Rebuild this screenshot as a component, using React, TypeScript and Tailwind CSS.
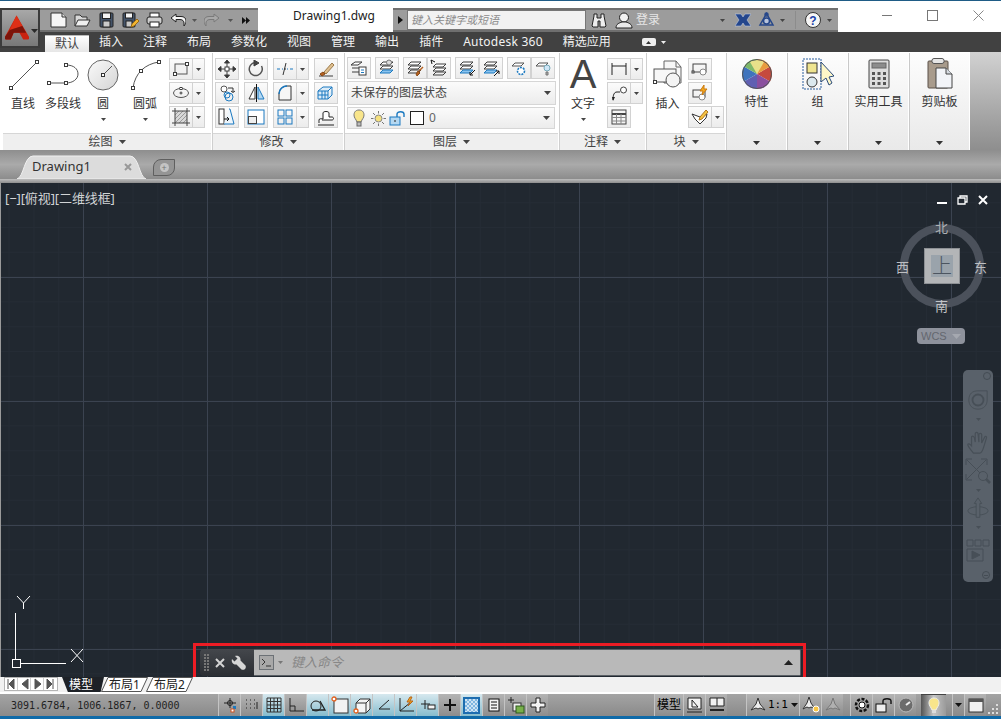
import type { ReactNode } from 'react';

const BLUE = '#1b79c0';
const DARK = '#3c3c3c';

function S({ w = 18, h = 18, children }: { w?: number; h?: number; children: ReactNode }) {
  return (
    <svg width={w} height={h} viewBox={`0 0 ${w} ${h}`} fill="none" stroke={DARK} strokeWidth={1} className="block flex-shrink-0">
      {children}
    </svg>
  );
}

function Caret({ color = '#444', up = false, w = 7 }: { color?: string; up?: boolean; w?: number }) {
  const h = Math.ceil(w / 2);
  return (
    <svg width={w} height={h} viewBox={`0 0 ${w} ${h}`} className="block flex-shrink-0">
      <polygon points={up ? `0,${h} ${w},${h} ${w / 2},0` : `0,0 ${w},0 ${w / 2},${h}`} fill={color} />
    </svg>
  );
}

function Pt({ x, y, s = 3, c = DARK }: { x: number; y: number; s?: number; c?: string }) {
  return <rect x={x - s / 2} y={y - s / 2} width={s} height={s} fill="#fff" stroke={c} />;
}

/* Ribbon building blocks */
function Small({ children }: { children: ReactNode }) {
  return (
    <div className="w-6 h-[22px] flex items-center justify-center border border-[#d2d2d2] bg-gradient-to-b from-[#fbfbfb] to-[#ececec]">
      {children}
    </div>
  );
}

function Split({ children }: { children: ReactNode }) {
  return (
    <div className="flex">
      <Small>{children}</Small>
      <div className="w-3 h-[22px] flex items-center justify-center border border-l-0 border-[#d2d2d2] bg-gradient-to-b from-[#fbfbfb] to-[#ececec]">
        <Caret w={5} />
      </div>
    </div>
  );
}

function Big({ icon, label, caret = false, w }: { icon: ReactNode; label: string; caret?: boolean; w: string }) {
  return (
    <div className={`${w} flex flex-col items-center flex-shrink-0`}>
      <div className="h-[38px] mt-[3px] flex items-center justify-center">{icon}</div>
      <div className="text-[12px] leading-[16px] text-[#333] mt-[2px] whitespace-nowrap">{label}</div>
      {caret && <div className="mt-[6px]"><Caret w={5} /></div>}
    </div>
  );
}

function Panel({ w, title, children, cls = '' }: { w: string; title: string; children: ReactNode; cls?: string }) {
  return (
    <div className={`${w} h-[97px] flex flex-col flex-shrink-0`}>
      <div className={`h-[80px] flex ${cls}`}>{children}</div>
      <div className="h-[17px] flex items-center justify-center gap-[6px] bg-[#efefef] border-t border-[#d6d6d6] text-[12px] text-[#444]">
        {title}
        <Caret w={7} />
      </div>
    </div>
  );
}

function Collapsed({ icon, label }: { icon: ReactNode; label: string }) {
  return (
    <div className="w-[59px] h-[97px] flex flex-col items-center flex-shrink-0 bg-gradient-to-b from-[#fdfdfd] to-[#e9e9e9]">
      <div className="h-[38px] mt-[2px] flex items-center justify-center">{icon}</div>
      <div className="text-[12px] leading-[16px] text-[#333] mt-[1px] whitespace-nowrap">{label}</div>
      <div className="mt-auto mb-[5px]"><Caret w={7} color="#333" /></div>
    </div>
  );
}

const Sep = () => <div className="w-[2px] h-[97px] bg-[#cfcfcf] flex-shrink-0 border-l border-white" />;

/* Layer stack helper used by the layer panel row */
function Stack({ color = 'none', stroke = DARK }: { color?: string; stroke?: string }) {
  return (
    <g>
      <path d="M5 3h10l-3 3H2z" fill="#fff" stroke={DARK} />
      <path d="M5 7h10l-3 3H2z" fill="#fff" stroke={DARK} />
      <path d="M5 11h10l-3 3H2z" fill={color} stroke={stroke} />
    </g>
  );
}

function Ribbon() {
  return (
    <div className="h-[98px] flex pl-[3px] pt-[1px] bg-white border-b border-white">
      <Panel w="w-[208px]" title="绘图">
        <Big
          w="w-[40px]"
          label="直线"
          icon={
            <S w={32} h={32}>
              <line x1="4" y1="29" x2="29" y2="4" stroke="#555" />
              <Pt x={4} y={29} />
              <Pt x={30} y={3} />
            </S>
          }
        />
        <Big
          w="w-[40px]"
          label="多段线"
          icon={
            <S w={32} h={24}>
              <path d="M2 20h17M19 2c8 0 12 4 12 9s-5 9-12 9" stroke="#555" />
              <Pt x={2} y={20} />
              <Pt x={19} y={20} />
              <Pt x={19} y={2} />
            </S>
          }
        />
        <Big
          w="w-[40px]"
          label="圆"
          caret
          icon={
            <svg width="32" height="32" viewBox="0 0 32 32" className="block">
              <defs>
                <linearGradient id="circ" x1="0" y1="0" x2="1" y2="1">
                  <stop offset="0" stopColor="#fbfbfb" />
                  <stop offset="1" stopColor="#d4d4d4" />
                </linearGradient>
              </defs>
              <circle cx="16" cy="16" r="15" fill="url(#circ)" stroke="#666" />
              <line x1="16" y1="16" x2="25" y2="7" stroke="#555" />
              <rect x="14.5" y="14.5" width="3" height="3" fill="#fff" stroke="#333" />
            </svg>
          }
        />
        <Big
          w="w-[44px]"
          label="圆弧"
          caret
          icon={
            <S w={32} h={32}>
              <path d="M4 29C6 14 16 5 30 3" stroke="#555" />
              <Pt x={4} y={29} />
              <Pt x={12} y={12} />
              <Pt x={30} y={3} />
            </S>
          }
        />
        <div className="flex flex-col gap-[2px] ml-[2px] mt-[5px]">
          <Split>
            <S>
              <rect x="3" y="4" width="12" height="10" fill="#f1f1f1" stroke="#555" />
              <Pt x={3} y={14} />
              <Pt x={15} y={4} />
            </S>
          </Split>
          <Split>
            <S>
              <ellipse cx="9" cy="9" rx="7.5" ry="4.5" stroke="#555" />
              <path d="M9 7.5v3M7.5 9h3" />
              <Pt x={9} y={4.5} s={2} />
            </S>
          </Split>
          <Split>
            <S>
              <rect x="3" y="3" width="12" height="12" fill="#d8d8d8" stroke="none" />
              <path d="M3 7l4-4M3 11l8-8M3 15L15 3M7 15l8-8M11 15l4-4" stroke="#8a8a8a" strokeWidth=".8" />
              <path d="M0 3h18M0 15h18M3 0v18M15 0v18" stroke="#444" />
            </S>
          </Split>
        </div>
      </Panel>
      <Sep />
      <Panel w="w-[130px]" title="修改" cls="pl-[2px] pt-[5px]">
        <div className="flex flex-col gap-[2px]">
          <Small>
            <S>
              <path d="M9 2v14M2 9h14" />
              <path d="M9 0l2.5 3h-5zM9 18l2.5-3h-5zM0 9l3-2.5v5zM18 9l-3-2.5v5z" fill="#333" />
              <rect x="7" y="7" width="4" height="4" fill="#fff" />
            </S>
          </Small>
          <Small>
            <S>
              <circle cx="6" cy="5" r="3" fill="#fff" stroke="#555" />
              <circle cx="11" cy="13" r="4" stroke={BLUE} />
              <circle cx="9" cy="11" r="3" stroke={BLUE} />
              <path d="M10 4h5v4m-2-1l2 1.5 2-1.5" stroke="#333" />
            </S>
          </Small>
          <Small>
            <S>
              <rect x="1" y="1" width="5" height="15" fill="#fff" stroke="#333" />
              <path d="M11 1h1l4 15H6" stroke={BLUE} fill="#eef6fc" />
              <path d="M6 11h5M9 9l2 2-2 2" stroke="#111" />
            </S>
          </Small>
        </div>
        <div className="flex flex-col gap-[2px] ml-[5px]">
          <Small>
            <S>
              <path d="M14.5 6A6.5 6.5 0 1 1 8 2.6" stroke="#555" strokeWidth="1.5" />
              <path d="M7 0l5 3-5 3z" fill="#444" />
            </S>
          </Small>
          <Small>
            <S>
              <path d="M8 3L2 15h6z" fill="#fff" stroke="#333" />
              <path d="M11 3l6 12h-6z" fill="#b4d8f2" stroke={BLUE} />
              <path d="M9.5 0v18" stroke="#111" />
            </S>
          </Small>
          <Small>
            <S>
              <rect x="1" y="2" width="16" height="14" fill="#fff" stroke={BLUE} />
              <rect x="1.5" y="8.5" width="8" height="7" fill="#eee" stroke="#444" />
            </S>
          </Small>
        </div>
        <div className="flex flex-col gap-[2px] ml-[5px]">
          <Split>
            <S>
              <path d="M1 9h3M6 9h1M11 9h1M14 9h3" stroke={BLUE} />
              <path d="M10 3L7 15" stroke="#333" />
              <path d="M8 9h2" stroke="#333" />
            </S>
          </Split>
          <Split>
            <S>
              <path d="M3 16V10C3 5 7 2 11 2h4v14z" fill="#f6f6f6" stroke="#333" />
              <path d="M3 10C3 5 7 2 11 2" stroke={BLUE} strokeWidth="1.4" />
            </S>
          </Split>
          <Split>
            <S>
              <rect x="2" y="2" width="6" height="6" stroke={BLUE} />
              <rect x="10" y="2" width="6" height="6" stroke={BLUE} />
              <rect x="2" y="10" width="6" height="6" stroke={BLUE} />
              <rect x="10" y="10" width="6" height="6" stroke={BLUE} />
            </S>
          </Split>
        </div>
        <div className="flex flex-col gap-[2px] ml-[5px]">
          <Small>
            <S>
              <path d="M2 16h14" />
              <path d="M3 14l3-2 2 2-3 2z" fill="#b5611f" stroke="#8a4a18" />
              <path d="M7 12l8-9 2 2-8 9z" fill="#e0c090" stroke="#9b7a4a" />
            </S>
          </Small>
          <Small>
            <S>
              <path d="M1 7h10l4-4H6z M1 7v8h10V7M11 15l4-4V3" stroke={BLUE} fill="#dcecf8" />
              <path d="M5 7v8M8 7v8M1 11h10" stroke={BLUE} />
            </S>
          </Small>
          <Small>
            <S>
              <path d="M2 15v-3c0-2 3-1 4-1V5c0-2 6-2 6 0v4h3c2 0 2 3 0 3H5" fill="#fff" stroke="#222" />
              <path d="M1 17h16" stroke="#222" />
            </S>
          </Small>
        </div>
      </Panel>
      <Sep />
      <Panel w="w-[213px]" title="图层" cls="flex-col pl-[2px] pt-[4px] gap-[2px]">
        <div className="flex">
          <Small>
            <S>
              <path d="M2 5h7M2 9h7M2 13h7" />
              <path d="M5 3h7l-4 3H1z" fill="#fff" />
              <rect x="9" y="8" width="7" height="8" fill="#fff" />
              <path d="M11 11h3M11 13.5h3" stroke={BLUE} />
            </S>
          </Small>
          <div className="w-[4px]" />
          <Small>
            <S>
              <Stack color="#8cc4ee" stroke={BLUE} />
              <circle cx="11" cy="3.5" r="2.5" fill="#ddd" stroke="#777" />
            </S>
          </Small>
          <div className="w-[4px]" />
          <div className="flex">
            <Small>
              <S>
                <Stack />
                <path d="M10 15l2-3 2 2-3 3z" fill="#b5611f" stroke="#8a4a18" />
                <path d="M13 12l4-4" stroke="#b5611f" strokeWidth="1.5" />
              </S>
            </Small>
            <Small>
              <S>
                <g transform="translate(1 2)">
                  <Stack />
                </g>
                <path d="M1 1l4 2M1 1l1 4" stroke="#111" />
              </S>
            </Small>
          </div>
          <div className="w-[4px]" />
          <div className="flex">
            <Small>
              <S>
                <Stack color="#8cc4ee" stroke={BLUE} />
                <path d="M17 11l-5 5M12 13v3h3" stroke="#111" />
              </S>
            </Small>
            <Small>
              <S>
                <Stack color="#8cc4ee" stroke={BLUE} />
                <path d="M12 17l5-5M14 12h3v3" stroke="#111" />
              </S>
            </Small>
          </div>
          <div className="w-[4px]" />
          <div className="flex">
            <Small>
              <S>
                <path d="M5 4h9l-3 3H2z" fill="#fff" stroke="#555" />
                <circle cx="11" cy="12" r="3.5" fill="#fff" stroke={BLUE} strokeDasharray="2 1" strokeWidth="1.6" />
              </S>
            </Small>
            <Small>
              <S>
                <path d="M5 4h9l-3 3H2z" fill="#fff" stroke="#555" />
                <circle cx="13" cy="9" r="3" fill="#cfe6f7" stroke="#7ab" />
                <path d="M12 13h2v3h-2z" fill="#aaa" stroke="#777" />
              </S>
            </Small>
          </div>
        </div>
        <div className="w-[209px] h-[24px] flex items-center justify-between pl-[3px] pr-[4px] border border-[#d6d6d6] bg-gradient-to-b from-[#fbfbfb] to-[#ececec] text-[12px] text-[#444]">
          未保存的图层状态
          <Caret w={7} />
        </div>
        <div className="w-[208px] h-[22px] flex items-center pl-[5px] pr-[4px] border border-[#d6d6d6] bg-gradient-to-b from-[#fbfbfb] to-[#ececec] text-[12px] text-[#444]">
          <S w={12} h={18}>
            <path d="M6 1C2 1 1 4 1 6c0 3 2 4 3 7h4c1-3 3-4 3-7 0-2-1-5-5-5z" fill="#f8e58b" stroke="#777" />
            <rect x="4" y="13" width="4" height="4" fill="#bbb" stroke="#666" />
          </S>
          <div className="w-[6px]" />
          <S w={15} h={15}>
            <circle cx="7.5" cy="7.5" r="3.5" fill="#f6e27f" stroke="#888" />
            <path d="M7.5 0v2.5M7.5 12.5V15M0 7.5h2.5M12.5 7.5H15M2 2l2 2M11 11l2 2M13 2l-2 2M4 11l-2 2" stroke="#777" />
          </S>
          <div className="w-[3px]" />
          <S w={17} h={15}>
            <rect x="1" y="6" width="10" height="8" fill="#b4d8f2" stroke={BLUE} />
            <path d="M8 6V3c0-3 7-3 7 0v3" stroke={BLUE} strokeWidth="1.4" />
            <path d="M6 9v2" stroke="#222" />
          </S>
          <div className="w-[4px]" />
          <div className="w-[14px] h-[14px] bg-white border border-[#222]" />
          <span className="ml-[5px] text-[#666]">0</span>
          <div className="ml-auto"><Caret w={7} /></div>
        </div>
      </Panel>
      <Sep />
      <Panel w="w-[85px]" title="注释">
        <div className="w-[46px] flex flex-col items-center flex-shrink-0">
          <div className="h-[38px] mt-[2px] flex items-center justify-center text-[40px] leading-[38px] text-[#444] [font-family:'Liberation_Sans',sans-serif]">A</div>
          <div className="text-[12px] leading-[16px] text-[#333] mt-[3px]">文字</div>
          <div className="mt-[6px]"><Caret w={5} /></div>
        </div>
        <div className="flex flex-col gap-[2px] mt-[5px] ml-[1px]">
          <Split>
            <S>
              <path d="M2 3v12M16 3v12" stroke="#222" />
              <path d="M2 6h14" stroke="#222" />
            </S>
          </Split>
          <Split>
            <S>
              <path d="M3 16c0-5 1-8 4-8h3" stroke="#222" />
              <path d="M3 17l-1-4h3z" fill="#222" stroke="none" />
              <circle cx="13.5" cy="6" r="3" fill="#fff" stroke="#444" />
            </S>
          </Split>
          <Small>
            <S>
              <rect x="2" y="2" width="14" height="14" fill="#f4f4f4" stroke="#444" />
              <path d="M2 6h14" stroke="#444" strokeWidth="2" />
              <path d="M2 9.5h14M2 13h14M6.5 6v10M11 6v10" stroke="#888" />
            </S>
          </Small>
        </div>
      </Panel>
      <Sep />
      <Panel w="w-[78px]" title="块">
        <Big
          w="w-[41px]"
          label="插入"
          icon={
            <S w={32} h={32}>
              <path d="M12 2h12l5 6v16H12z" fill="#f7f7f7" stroke="#666" />
              <path d="M24 2v6h5" stroke="#666" />
              <rect x="2" y="10" width="22" height="13" fill="#f7f7f7" stroke="#555" />
              <circle cx="21" cy="21" r="7" fill="#f4f4f4" stroke="#555" />
              <Pt x={3} y={23} />
            </S>
          }
        />
        <div className="flex flex-col gap-[2px] mt-[5px]">
          <Small>
            <S>
              <rect x="2" y="4" width="13" height="8" stroke="#444" />
              <circle cx="12" cy="12" r="3" fill="#fff" stroke="#888" />
              <Pt x={2} y={12} s={2} />
            </S>
          </Small>
          <Small>
            <S>
              <rect x="2" y="6" width="12" height="7" stroke="#444" />
              <circle cx="11" cy="13" r="3" fill="#fff" stroke="#888" />
              <path d="M13 1L9 7h3l-1 4 5-6h-3z" fill="#f5a81c" stroke="#c97a10" />
            </S>
          </Small>
          <Split>
            <S>
              <path d="M1 6l8 3 7-3-1 4-6 6-5-5z" fill="#fff" stroke="#333" />
              <path d="M9 9l6-7 2 2-6 7-3 1z" fill="#f5c342" stroke="#b0761c" />
            </S>
          </Split>
        </div>
      </Panel>
      <Sep />
      <Collapsed
        label="特性"
        icon={
          <svg width="30" height="30" viewBox="0 0 30 30" className="block">
            <path d="M15 15L28 7.500A15 15 0 0 1 28 22.500z" fill="#c64a3d" />
            <path d="M15 15l13 7.500A15 15 0 0 1 15 30z" fill="#8a4f9f" />
            <path d="M15 15v15A15 15 0 0 1 2 22.500z" fill="#5f5fb2" />
            <path d="M15 15L2 22.500A15 15 0 0 1 2 7.500z" fill="#3f74bd" />
            <path d="M15 15L2 7.500A15 15 0 0 1 15 0z" fill="#7db86a" />
            <path d="M15 15V0A15 15 0 0 1 28 7.500z" fill="#e89b3f" />
            <path d="M15 15L8 2.900A15 15 0 0 1 22 2.900z" fill="#e8e08a" />
            <circle cx="15" cy="15" r="14.500" fill="none" stroke="#555" />
          </svg>
        }
      />
      <div className="w-[2px] h-[97px] bg-[#c9c9c9] border-l border-white flex-shrink-0" />
      <Collapsed
        label="组"
        icon={
          <svg width="32" height="32" viewBox="0 0 32 32" className="block">
            <rect x="1" y="1" width="18" height="30" fill="none" stroke="#2a5f9e" strokeDasharray="2 1" />
            <rect x="5" y="5" width="10" height="10" fill="#efe48f" stroke="#333" />
            <circle cx="10" cy="24" r="5" fill="#dbe9ee" stroke="#333" />
            <path d="M19 4v20l5-4 3 7 3-2-3-6 5-1z" fill="#fdf7c8" stroke="#2a4a7a" />
          </svg>
        }
      />
      <div className="w-[2px] h-[97px] bg-[#c9c9c9] border-l border-white flex-shrink-0" />
      <Collapsed
        label="实用工具"
        icon={
          <svg width="22" height="30" viewBox="0 0 22 30" className="block">
            <rect x="1" y="1" width="20" height="28" rx="1" fill="#dedede" stroke="#444" />
            <rect x="4" y="4" width="14" height="5" fill="#8c8c8c" stroke="#666" />
            <path d="M4 13h3v3H4zM9.500 13h3v3h-3zM15 13h3v3h-3zM4 18h3v3H4zM9.500 18h3v3h-3zM15 18h3v3h-3zM4 23h3v3H4zM9.500 23h3v3h-3zM15 23h3v3h-3z" fill="#555" />
          </svg>
        }
      />
      <div className="w-[2px] h-[97px] bg-[#c9c9c9] border-l border-white flex-shrink-0" />
      <Collapsed
        label="剪贴板"
        icon={
          <svg width="26" height="32" viewBox="0 0 26 32" className="block">
            <rect x="1" y="3" width="20" height="27" rx="1" fill="#a89b8c" stroke="#5b5148" />
            <rect x="5" y="0.500" width="12" height="5" rx="2" fill="#e6e6e6" stroke="#555" />
            <path d="M9 10h10l6 6v14H9z" fill="#f2f4f8" stroke="#444" />
            <path d="M19 10v6h6" stroke="#444" fill="#d6dbe2" />
          </svg>
        }
      />
      <div className="flex-1 -mt-[1px] h-[98px] bg-gradient-to-b from-[#d2d2d2] to-[#8e8e8e] ml-[1px]" />
    </div>
  );
}

function Qat() {
  return (
    <div className="w-[218px] h-[24px] mt-[7px] flex items-center bg-[#9c9c9c] border-t-2 border-b-2 border-[#6f6f6f] pl-[6px] flex-shrink-0">
      <div className="w-6 flex justify-center">
        <S w={17} h={16}>
          <path d="M1 1h11l4 4v10H1z" fill="#f6f6f6" stroke="#333" />
          <path d="M12 1v4h4" fill="#ddd" stroke="#333" />
        </S>
      </div>
      <div className="w-6 flex justify-center">
        <S w={17} h={14}>
          <path d="M1 13V2h5l2 2h5v3" fill="#d8d8d8" stroke="#333" />
          <path d="M1 13l3-6h12l-3 6z" fill="#f0f0f0" stroke="#333" />
        </S>
      </div>
      <div className="w-6 flex justify-center">
        <S w={15} h={16}>
          <rect x="1" y="1" width="13" height="14" rx="1" fill="#44546a" stroke="#222" />
          <rect x="3.500" y="1" width="8" height="5.500" fill="#f4f4f4" stroke="#222" />
          <rect x="4" y="9" width="7" height="6" fill="#c9c9c9" stroke="#222" />
        </S>
      </div>
      <div className="w-6 flex justify-center">
        <S w={17} h={16}>
          <rect x="1" y="1" width="12" height="14" rx="1" fill="#44546a" stroke="#222" />
          <rect x="3.500" y="1" width="7" height="5" fill="#f4f4f4" stroke="#222" />
          <rect x="4" y="9" width="6" height="6" fill="#c9c9c9" stroke="#222" />
          <path d="M9 15l1-3 5-5 2 2-5 5z" fill="#f2b632" stroke="#9a6a15" />
        </S>
      </div>
      <div className="w-6 flex justify-center">
        <S w={17} h={16}>
          <rect x="4" y="1" width="9" height="5" fill="#fff" stroke="#222" />
          <rect x="1" y="5" width="15" height="7" rx="2" fill="#cfcfcf" stroke="#222" />
          <rect x="4" y="10" width="9" height="5" fill="#fff" stroke="#222" />
        </S>
      </div>
      <div className="w-[15px] flex justify-center ml-[4px] mr-[2px]">
        <S w={16} h={14}>
          <path d="M6 1L1 5l5 4V6.500h4c3 0 4 2 4 3.500v3c1.500-2 2-3.500 2-5 0-3-2-4.500-5-4.500H6z" fill="#f6f6f6" stroke="#222" />
        </S>
      </div>
      <div className="w-[14px] flex justify-center"><Caret w={5} color="#555" /></div>
      <div className="w-[22px] flex justify-center">
        <S w={16} h={14}>
          <path d="M10 1l5 4-5 4V6.500H6c-3 0-4 2-4 3.500v3C.5 11 0 9.500 0 8c0-3 2-4.500 5-4.500h5z" fill="#a8a8a8" stroke="#7a7a7a" />
        </S>
      </div>
      <div className="w-[14px] flex justify-center"><Caret w={5} color="#555" /></div>
      <div className="w-[18px] flex justify-center">
        <svg width="8" height="7" viewBox="0 0 8 7"><path d="M0 0l4 3.500L0 7zM4 0l4 3.500L4 7z" fill="#111" /></svg>
      </div>
    </div>
  );
}

function InfoBar() {
  return (
    <div className="w-[445px] h-[24px] mt-[7px] flex items-center bg-[#9c9c9c] border-t-2 border-b-2 border-[#6f6f6f] flex-shrink-0">
      <div className="w-[14px] flex justify-center">
        <svg width="5" height="8" viewBox="0 0 5 8"><path d="M0 0l5 4-5 4z" fill="#111" /></svg>
      </div>
      <div className="w-[179px] h-[20px] flex items-center bg-[#f2f2f2] border border-[#777] pl-[3px] text-[11px] italic text-[#8c8c8c]">
        键入关键字或短语
      </div>
      <div className="ml-[5px] w-[16px]">
        <S w={16} h={15}>
          <path d="M3 1h3v4h4V1h3v2l2 10-1 1H9V8H7v6H2l-1-1L3 3z" fill="#eee" stroke="#222" />
        </S>
      </div>
      <div className="ml-[8px]">
        <svg width="18" height="17" viewBox="0 0 18 17" className="block">
          <circle cx="9" cy="5.500" r="4.500" fill="#f2f2f2" stroke="#222" />
          <path d="M1 16c0-4 3-5 6-6h4c3 1 6 2 6 6z" fill="#e8e8e8" stroke="#222" />
        </svg>
      </div>
      <span className="ml-[3px] text-[12px] text-[#e6e6e6]">登录</span>
      <div className="ml-[60px]"><Caret w={5} color="#444" /></div>
      <div className="ml-[10px]">
        <svg width="16" height="14" viewBox="0 0 16 14" className="block">
          <path d="M0 1h6l2 3 2-3h6l-4 6 4 6h-6L8 10l-2 3H0l4-6z" fill="#24468c" stroke="#c9d4ee" strokeWidth=".5" />
        </svg>
      </div>
      <div className="ml-[7px]">
        <svg width="17" height="16" viewBox="0 0 17 16" fill="none" stroke="#26478a" strokeWidth="1.500" className="block">
          <path d="M8.500 1.500L2 13h13z" />
          <circle cx="8.500" cy="9" r="3" fill="#b8c4dc" />
          <circle cx="8.500" cy="2.500" r="1.500" />
        </svg>
      </div>
      <div className="ml-[5px]"><Caret w={5} color="#444" /></div>
      <div className="w-px h-[18px] bg-[#8c8c8c] ml-[10px]" />
      <div className="ml-[9px]">
        <svg width="16" height="16" viewBox="0 0 16 16" className="block">
          <circle cx="8" cy="8" r="7.500" fill="#f6f6f6" stroke="#333" />
          <text x="8" y="12.500" textAnchor="middle" fontSize="12" fontWeight="700" fill="#1a3fa8" fontFamily="Liberation Sans">?</text>
        </svg>
      </div>
      <div className="ml-[6px]"><Caret w={5} color="#444" /></div>
    </div>
  );
}

function TitleBar() {
  return (
    <div className="h-[31px] flex bg-white relative flex-shrink-0">
      <div className="w-10 flex-shrink-0" />
      <Qat />
      <div className="w-[135px] text-center pl-[17px] pt-[6px] text-[12px] leading-[18px] text-[#222] flex-shrink-0">Drawing1.dwg</div>
      <InfoBar />
      <div className="flex-1 flex items-start">
        <div className="w-[10px] h-px bg-[#777] ml-[44px] mt-[14px]" />
        <div className="w-[11px] h-[11px] border border-[#777] ml-[35px] mt-[9px]" />
        <svg width="11" height="11" viewBox="0 0 11 11" className="block ml-[35px] mt-[9px]"><path d="M.5.500l10 10M10.500.500l-10 10" stroke="#888" /></svg>
      </div>
    </div>
  );
}

const TABS = ['默认', '插入', '注释', '布局', '参数化', '视图', '管理', '输出', '插件', 'Autodesk 360', '精选应用'];

function TabBar() {
  return (
    <div className="h-[20px] flex items-end bg-[#414141] pl-[45px] text-[12px] flex-shrink-0">
      {TABS.map((t, i) => (
        <div
          key={t}
          className={
            i === 0
              ? 'h-[17px] px-[10px] flex items-center bg-gradient-to-b from-[#ffffff] to-[#e6e6e6] text-[#444] border-t border-[#bbb]'
              : t === 'Autodesk 360'
                ? 'h-[20px] px-[10px] flex items-center text-[#f2f2f2] tracking-[0.25px]'
                : 'h-[20px] px-[10px] flex items-center text-[#f2f2f2]'
          }
        >
          {t}
        </div>
      ))}
      <div className="self-center ml-[21px] flex items-center gap-[5px]">
        <div className="w-[14px] h-[8px] bg-[#eee] rounded-[2px] flex items-center justify-center"><Caret up w={5} color="#333" /></div>
        <Caret w={5} color="#eee" />
      </div>
    </div>
  );
}

function DocTabs() {
  return (
    <div className="h-[29px] flex items-end pl-[17px] bg-gradient-to-b from-[#8e8e8e] via-[#aaaaaa] to-[#8c8c8c] flex-shrink-0">
      <div className="relative w-[129px] h-[24px] flex items-center pl-[15px] pr-[14px] text-[13px] text-[#333]">
        <svg width="129" height="24" viewBox="0 0 129 24" className="absolute inset-0">
          <path d="M0 24C7 22 7 1 16 1h97c9 0 9 21 16 23z" fill="#dcdcdc" stroke="#f0f0f0" />
        </svg>
        <span className="relative">Drawing1</span>
        <svg width="8" height="8" viewBox="0 0 8 8" className="relative ml-auto"><path d="M1 1l6 6M7 1L1 7" stroke="#999" strokeWidth="2" /></svg>
      </div>
      <div className="mb-[3px] ml-[7px] w-[22px] h-[17px] rounded-tl-[8px] rounded-br-[8px] bg-[#959595] border border-[#5f5f5f] flex items-center justify-center">
        <div className="w-[9px] h-[9px] rounded-full bg-[#c4c4c4] flex items-center justify-center text-[9px] leading-none text-[#777]">+</div>
      </div>
    </div>
  );
}

function ViewCube() {
  return (
    <div className="absolute left-[895px] top-[36px] w-[92px] h-[130px]">
      <svg width="90" height="90" viewBox="0 0 90 90" className="absolute left-[1px] top-[2px]">
        <circle cx="45" cy="45" r="38" fill="none" stroke="#4b515b" strokeWidth="8" />
      </svg>
      <div className="absolute left-[28px] top-[29px] w-[36px] h-[36px] bg-[#b3b5b7] border border-[#8d9094] flex items-center justify-center">
        <div className="w-[22px] h-[22px] bg-[#9aa3ab] flex items-center justify-center text-[20px] font-light leading-none text-[#4c5560]">上</div>
      </div>
      <span className="absolute left-[39px] top-[0px] text-[13px] leading-[16px] text-[#aeb1b5]">北</span>
      <span className="absolute left-[39px] top-[79px] text-[13px] leading-[16px] text-[#c2c4c7]">南</span>
      <span className="absolute left-0 top-[40px] text-[13px] leading-[16px] text-[#bdbfc2]">西</span>
      <span className="absolute left-[78px] top-[40px] text-[13px] leading-[16px] text-[#bdbfc2]">东</span>
      <div className="absolute left-[21px] top-[109px] w-[48px] h-[16px] flex items-center pl-[4px] gap-[5px] rounded-[4px] bg-[#8e929c] text-[11px] leading-none text-[#64676f] [font-family:'Liberation_Sans',sans-serif]">
        WCS
        <Caret w={9} color="#a5a8b0" />
      </div>
    </div>
  );
}

function NavBar() {
  const c = '#474f57';
  return (
    <div className="absolute left-[962px] top-[187px] w-[30px] h-[212px] flex flex-col items-center rounded-[5px] bg-[#59616a]">
      <div className="absolute right-[2px] top-[2px] w-[8px] h-[8px] rounded-full border border-[#444c54]" />
      <svg width="22" height="22" viewBox="0 0 24 24" fill="none" stroke={c} className="mt-[19px] block">
        <path d="M2 12C2 5 6 2 12 2h10v10c0 6-4 10-10 10S2 18 2 12z" />
        <circle cx="12" cy="12" r="6" strokeWidth="2" />
      </svg>
      <div className="mt-[7px]"><Caret w={5} color={c} /></div>
      <svg width="24" height="24" viewBox="0 0 24 26" fill="none" stroke={c} className="mt-[10px] block">
        <path d="M7 24C4 20 1 17 1 15c0-2 2-1 4 1V7c0-2 2-2 3 0l1 5V3c0-2 3-2 3 0l1 9V4c0-2 3-2 3 0v9l3-6c1-2 3-1 2 1l-3 10c-1 3-2 6-4 6z" strokeWidth="1.300" />
      </svg>
      <svg width="26" height="26" viewBox="0 0 26 26" fill="none" stroke={c} className="mt-[3px] block">
        <path d="M2 2l20 20M21 2L2 21" />
        <path d="M1 1h6M1 1v6M22 1h-6M22 1v6M1 22h6M1 22v-6" />
        <circle cx="18" cy="18" r="4.500" fill="#59616a" />
        <path d="M21 21l4 4" strokeWidth="2.500" />
      </svg>
      <div className="mt-[5px]"><Caret w={5} color={c} /></div>
      <svg width="24" height="24" viewBox="0 0 24 26" fill="none" stroke={c} className="mt-[5px] block">
        <ellipse cx="12" cy="15" rx="11" ry="4.500" />
        <path d="M12 1l-4 6h2v15h4V7h2z" fill="#59616a" />
      </svg>
      <div className="mt-[5px]"><Caret w={5} color={c} /></div>
      <svg width="24" height="24" viewBox="0 0 24 24" fill="none" stroke={c} className="mt-[10px] block">
        <path d="M1 1h6v6H1zM9 1h6v6H9zM17 1h6v6h-6zM1 10h16v12H1z" />
        <path d="M6 12l8 4-8 4z" fill={c} />
      </svg>
      <div className="absolute right-[3px] bottom-[3px] w-[8px] h-[8px] rounded-full border border-[#444c54] flex items-center justify-center">
        <div className="w-[4px] h-px bg-[#444c54]" />
      </div>
    </div>
  );
}

function CommandLine() {
  return (
    <div className="absolute left-[192px] top-[460px] w-[613px] h-[37px] border-[3px] border-[#ed1c24] pl-[4px] pt-[3px] pb-[1px] pr-[2px] flex">
      <div className="w-[54px] h-full flex items-center rounded-l-[4px] bg-gradient-to-b from-[#44474c] to-[#2b2e33] pl-[4px]">
        <div className="w-[5px] h-[18px] grid grid-cols-2 gap-[1px]">
          {Array.from({ length: 12 }).map((_, i) => (
            <div key={i} className="w-[2px] h-[2px] bg-[#777]" />
          ))}
        </div>
        <svg width="10" height="10" viewBox="0 0 10 10" className="ml-[6px] block"><path d="M1 1l8 8M9 1L1 9" stroke="#d4d4d4" strokeWidth="2" /></svg>
        <svg width="15" height="15" viewBox="0 0 15 15" className="ml-[6px] block">
          <path d="M1 4L3.500 6.500L6.500 3.500L4 1C7 0 10 2 9.500 5.500L14.500 10.500C15 11.500 15 13 14 14C13 15 11.500 15 10.500 14.500L5.500 9.500C2 10 0 7 1 4z" fill="#d6d6d6" />
        </svg>
      </div>
      <div className="flex-1 h-full flex items-center bg-[#b9b9b9] border border-[#5a5f64] border-l-0 pl-[5px] pr-[5px] rounded-r-[2px]">
        <div className="w-[15px] h-[15px] border border-[#6c7176] bg-[#a8a8a8] flex items-center justify-center">
          <svg width="11" height="9" viewBox="0 0 11 9"><path d="M1 1l3 3-3 3M5 8h5" stroke="#333" fill="none" /></svg>
        </div>
        <div className="ml-[4px]"><Caret w={5} color="#777" /></div>
        <span className="ml-[8px] text-[13px] italic text-[#878787]">键入命令</span>
        <div className="ml-auto mr-[2px]"><Caret up w={9} color="#222" /></div>
      </div>
    </div>
  );
}

function Viewport() {
  return (
    <div className="relative h-[494px] flex-shrink-0 overflow-hidden border-l border-[#9a9a9a] bg-[#212830] bg-[linear-gradient(#3b4350_1px,transparent_1px),linear-gradient(90deg,#3b4350_1px,transparent_1px),linear-gradient(#252c35_1px,transparent_1px),linear-gradient(90deg,#252c35_1px,transparent_1px)] bg-size-[124px_124px,124px_124px,24.8px_24.8px,24.8px_24.8px] bg-position-[82px_94px,82px_94px,7.6px_19.2px,7.6px_19.2px]">
      <div className="absolute left-[4px] top-[7px] text-[13px] leading-[16px] tracking-[-0.1px] text-[#d2d4d6]">[−][俯视][二维线框]</div>
      <div className="absolute left-[936px] top-[12px] flex items-center gap-[10px]">
        <div className="w-[10px] h-[2px] bg-white mt-[5px]" />
        <svg width="11" height="10" viewBox="0 0 11 10"><path d="M3 3V1h7v6H8M1 3h7v6H1z" stroke="#fff" fill="none" strokeWidth="1.300" /></svg>
        <svg width="10" height="10" viewBox="0 0 10 10"><path d="M1 1l8 8M9 1L1 9" stroke="#fff" strokeWidth="2" /></svg>
      </div>
      <ViewCube />
      <NavBar />
      <svg width="90" height="80" viewBox="0 0 90 80" className="absolute left-0 top-[408px]" fill="none" stroke="#fff">
        <path d="M14.500 22V68M20 72.500H65" />
        <rect x="11.500" y="68.500" width="8" height="8" />
        <path d="M16 5l6.500 7 6.500-7M22.500 12v6" />
        <path d="M70 58l12 13M82 58L70 71" />
      </svg>
      <CommandLine />
    </div>
  );
}

function LayoutTab({ label, cls }: { label: string; cls: string }) {
  return (
    <div className={`relative w-[47px] h-[15px] flex justify-center text-[#222] ${cls}`}>
      <svg width="47" height="15" viewBox="0 0 47 15" className="absolute inset-0">
        <path d="M7 .5H46.500L40 14.500H.5z" fill="#fff" stroke="#555" />
      </svg>
      <span className="relative">{label}</span>
    </div>
  );
}

function LayoutTabs() {
  return (
    <div className="h-[15px] flex bg-[#f1f1f1] pl-[4px] text-[12px] leading-[15px] flex-shrink-0">
      <div className="flex h-[14px] border border-[#b5b5b5] bg-white">
        {['M7 1v10L2 6zM1 1v10', 'M8 1v10L2 6z', 'M2 1v10l6-5z', 'M1 1v10l5-5zM7 1v10'].map((d, i) => (
          <div key={i} className="w-[13px] flex items-center justify-center border-r last:border-r-0 border-[#cfcfcf]">
            <svg width="9" height="12" viewBox="0 0 9 12"><path d={d} fill="#555" stroke="#555" /></svg>
          </div>
        ))}
      </div>
      <div className="ml-[4px] w-[42px] flex justify-center pr-[4px] bg-[#1d2127] text-white [clip-path:polygon(0_0,100%_0,92%_100%,14%_100%)]">模型</div>
      <LayoutTab label="布局1" cls="-ml-[3px]" />
      <LayoutTab label="布局2" cls="-ml-[2px]" />
    </div>
  );
}

/* Status bar toggle */
function Tog({ on = false, children }: { on?: boolean; children: ReactNode }) {
  return (
    <div
      className={`w-[22px] h-[22px] flex items-center justify-center border-l border-[#c4c4c4] flex-shrink-0 ${
        on ? 'bg-gradient-to-b from-[#d6e8ee] to-[#86bccd]' : 'bg-gradient-to-b from-[#b4b4b4] to-[#8d8d8d]'
      }`}
    >
      {children}
    </div>
  );
}

function StatusBar() {
  return (
    <div className="h-[22px] flex items-center mt-[2px] bg-gradient-to-b from-[#a4a4a4] to-[#8a8a8a] flex-shrink-0 overflow-hidden">
      <div className="w-[218px] pl-[11px] text-[10px] text-[#222] [font-family:'DejaVu_Sans_Mono',monospace] flex-shrink-0 whitespace-pre">
        3091.6784, 1006.1867, 0.0000
      </div>
      <Tog>
        <S w={16} h={16}>
          <path d="M8 1v10M2 6h12" stroke="#222" />
          <circle cx="8" cy="6" r="2.500" stroke="#222" />
          <rect x="11" y="9" width="3" height="3" fill={BLUE} stroke="none" />
          <rect x="9" y="12" width="3" height="3" fill="#fff" stroke="#d0531e" />
        </S>
      </Tog>
      <Tog>
        <svg width="14" height="12" viewBox="0 0 14 12"><path d="M1 1h1M5 1h1M9 1h1M1 5h1M5 5h1M9 5h1M1 9h1M5 9h1M9 9h1M12 3v7" stroke="#222" /></svg>
      </Tog>
      <Tog on>
        <svg width="16" height="16" viewBox="0 0 16 16" fill="none"><path d="M1 1h14v14H1zM4.500 1v14M8 1v14M11.500 1v14M1 4.500h14M1 8h14M1 11.500h14" stroke="#333" /></svg>
      </Tog>
      <Tog>
        <svg width="16" height="16" viewBox="0 0 16 16" fill="none"><path d="M2 1v13h14M2 9h5v5" stroke="#222" /></svg>
      </Tog>
      <Tog on>
        <svg width="16" height="14" viewBox="0 0 16 14" fill="none" stroke="#222"><circle cx="6" cy="8" r="5" /><path d="M2 12h13L10 3" strokeWidth="1.300" /></svg>
      </Tog>
      <Tog on>
        <svg width="18" height="18" viewBox="0 0 18 18"><rect x="3" y="3" width="14" height="14" fill="#f2f2f2" stroke="#333" /><circle cx="3" cy="3" r="2" fill="#fff" stroke="#e2601e" strokeWidth="1.300" /></svg>
      </Tog>
      <Tog on>
        <svg width="18" height="18" viewBox="0 0 18 18"><path d="M3 15V7l4-4h10v10l-4 4H5" fill="#f4f4f4" stroke="#333" /><path d="M3 7h10v10M13 7l4-4" stroke="#333" fill="none" /><circle cx="3" cy="15" r="2" fill="#fff" stroke="#e2601e" strokeWidth="1.300" /></svg>
      </Tog>
      <Tog on>
        <svg width="14" height="12" viewBox="0 0 14 12" fill="none"><path d="M12 1L2 10h11" stroke="#222" /></svg>
      </Tog>
      <Tog on>
        <svg width="18" height="18" viewBox="0 0 18 18" fill="none"><path d="M3 2v13h14M3 15L14 6" stroke="#222" /><path d="M13 1l-3 5h3l-2 4 5-5h-3l2-4z" fill="#f5a81c" stroke="#b5651d" /></svg>
      </Tog>
      <Tog on>
        <svg width="16" height="12" viewBox="0 0 16 12" fill="none"><path d="M5 1v9M1 5h9" stroke="#222" /><rect x="8" y="6" width="7" height="4" fill="#f4f4f4" stroke="#222" /></svg>
      </Tog>
      <Tog>
        <svg width="14" height="14" viewBox="0 0 14 14"><path d="M7 1v12M1 7h12" stroke="#111" strokeWidth="2" /></svg>
      </Tog>
      <Tog on>
        <div className="w-[17px] h-[17px] border-2 border-[#1d6db0] bg-[repeating-conic-gradient(#7fb5e0_0_25%,#cfe3f3_0_50%)] bg-size-[4px_4px]" />
      </Tog>
      <Tog>
        <svg width="12" height="14" viewBox="0 0 12 14"><rect x="1" y="1" width="10" height="12" fill="#f4f4f4" stroke="#111" /><path d="M3 4h6M3 7h6M3 10h6" stroke="#111" /></svg>
      </Tog>
      <Tog>
        <svg width="18" height="18" viewBox="0 0 18 18" fill="none"><path d="M4 1v6M1 4h6" stroke="#222" /><rect x="6" y="7" width="8" height="8" fill="#eee" stroke="#333" /><rect x="9" y="10" width="8" height="7" fill="#78b04a" stroke="#2f5a1e" /></svg>
      </Tog>
      <Tog>
        <svg width="16" height="16" viewBox="0 0 16 16"><path d="M6 1h4v5h5v4h-5v5H6v-5H1V6h5z" fill="#f4f4f4" stroke="#222" /></svg>
      </Tog>
      <div className="w-[106px] flex-shrink-0" />
      <div className="w-[29px] h-[22px] flex items-center justify-center border-l border-[#c4c4c4] bg-gradient-to-b from-[#b4b4b4] to-[#8d8d8d] text-[12px] text-black flex-shrink-0">模型</div>
      <Tog>
        <svg width="17" height="16" viewBox="0 0 17 16" fill="none"><path d="M2 1h13v11H2z" fill="#f2f2f2" stroke="#222" /><path d="M6 3v7h6z" stroke="#222" /><path d="M1 15h15" stroke="#222" /></svg>
      </Tog>
      <Tog>
        <svg width="18" height="16" viewBox="0 0 18 16" fill="none"><path d="M2 1h14v8H2zM9 1v8" fill="#f2f2f2" stroke="#222" /><path d="M2 13h14" stroke="#222" strokeWidth="2" /></svg>
      </Tog>
      <div className="w-[19px] flex-shrink-0" />
      <div className="w-[53px] h-[22px] flex items-center pl-[3px] border-l border-[#c4c4c4] bg-gradient-to-b from-[#b4b4b4] to-[#8d8d8d] text-[12px] text-black flex-shrink-0">
        <svg width="16" height="16" viewBox="0 0 16 16"><path d="M8 1l2 6 5 6-5-2-2 1-2-1-5 2 5-6z" fill="#eee" stroke="#333" /></svg>
        <span className="ml-[2px] [font-family:'DejaVu_Sans_Mono',monospace] text-[11px]">1:1</span>
        <div className="ml-[3px]"><Caret w={7} color="#111" /></div>
      </div>
      <Tog>
        <svg width="18" height="18" viewBox="0 0 18 18"><path d="M7 1l2 6 4 6-4-2-2 1-2-1-4 2 4-6z" fill="#eee" stroke="#333" /><circle cx="14" cy="13" r="3" fill="#f6c544" stroke="#fff" /></svg>
      </Tog>
      <Tog>
        <svg width="16" height="16" viewBox="0 0 16 16"><path d="M8 1l2 6 5 6-5-2-2 1-2-1-5 2 5-6z" fill="#b0b0b0" stroke="#777" /></svg>
      </Tog>
      <div className="w-[7px] flex-shrink-0" />
      <Tog>
        <svg width="18" height="18" viewBox="0 0 18 18" fill="none"><circle cx="9" cy="9" r="6" stroke="#111" strokeWidth="2.500" strokeDasharray="3 1.500" /><circle cx="9" cy="9" r="3" fill="#fff" stroke="#111" /></svg>
      </Tog>
      <Tog>
        <svg width="18" height="16" viewBox="0 0 18 16" fill="none"><rect x="1" y="7" width="10" height="8" fill="#eee" stroke="#111" /><path d="M8 7V4c0-3 8-3 8 0v3" stroke="#111" strokeWidth="1.400" /></svg>
      </Tog>
      <Tog>
        <svg width="16" height="16" viewBox="0 0 16 16"><circle cx="8" cy="8" r="7" fill="#6c6c6c" stroke="#bbb" /><path d="M8 8l4-3" stroke="#eee" strokeWidth="2" /></svg>
      </Tog>
      <div className="w-[5px] flex-shrink-0" />
      <div className="w-[25px] h-[22px] flex items-center justify-center border-t border-[#444] bg-gradient-to-r from-[#555555] via-[#c6c6c6] to-[#9a9a9a] flex-shrink-0">
        <svg width="12" height="17" viewBox="0 0 12 17"><path d="M6 1C2 1 1 4 1 6c0 3 2 4 3 7h4c1-3 3-4 3-7 0-2-1-5-5-5z" fill="#f8e58b" stroke="#eee" /><rect x="4" y="13" width="4" height="3" fill="#ddd" /></svg>
      </div>
      <div className="w-[12px] ml-[6px] h-[22px] flex items-center justify-center border-l border-[#c4c4c4] flex-shrink-0"><Caret w={7} color="#111" /></div>
      <Tog>
        <svg width="16" height="15" viewBox="0 0 16 15"><rect x="1" y="1" width="14" height="13" fill="#f0f0f0" stroke="#333" /><path d="M1 1h14v3H1z" fill="#555" /></svg>
      </Tog>
      <div className="flex-1 flex justify-end items-end pr-[2px] self-end pb-[2px]">
        <svg width="11" height="11" viewBox="0 0 11 11"><path d="M8 1h2v2H8zM4 5h2v2H4zM8 5h2v2H8zM0 9h2v2H0zM4 9h2v2H4zM8 9h2v2H8z" fill="#ddd" /></svg>
      </div>
    </div>
  );
}

export default function App() {
  return (
    <div className="relative w-[1001px] h-[719px] flex flex-col overflow-hidden bg-white [font-family:'Noto_Sans','Noto_Sans_CJK_SC',sans-serif]">
      <div className="h-px bg-[#1f5c86] flex-shrink-0" />
      <TitleBar />
      <TabBar />
      <Ribbon />
      <DocTabs />
      <div className="h-[4px] bg-gradient-to-b from-[#bdbdbd] to-[#8e8e8e] flex-shrink-0" />
      <Viewport />
      <LayoutTabs />
      <StatusBar />
      <div className="flex-1 bg-[#0f6aa8]" />
      {/* Application button sits over the title bar and tabs */}
      <div className="absolute left-0 top-[8px] w-[40px] h-[40px] flex items-center pl-[3px] border-2 border-[#3b3b3b] bg-gradient-to-b from-[#a8a8a8] to-[#787878]">
        <svg width="25" height="26" viewBox="0 0 25 26" className="block">
          <path d="M12 0L25 22Q25.500 25 24 25H19L15 18H9L6 25H1Q-.5 25 0 22z" fill="#c9230f" />
          <path d="M12 0L18 11 5 15z" fill="#de2f16" />
          <path d="M5 15L18 11 22 18H9L6 25H1Q-.5 25 0 22z" fill="#7c140a" />
        </svg>
        <div className="ml-[2px] mt-[6px]"><Caret w={7} color="#2a2a2a" /></div>
      </div>
    </div>
  );
}
